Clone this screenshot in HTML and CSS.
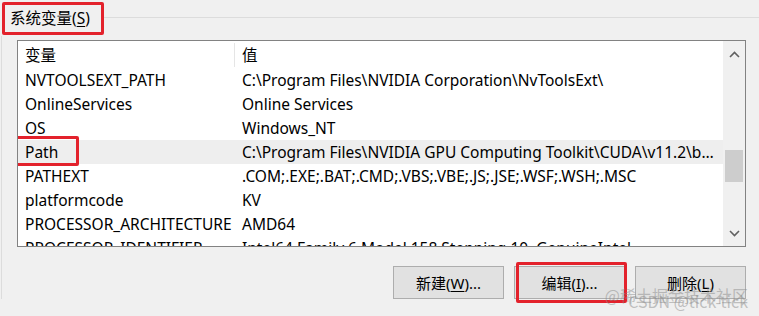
FILE: index.html
```html
<!DOCTYPE html>
<html>
<head>
<meta charset="utf-8">
<link rel="stylesheet" href="styles.css">
</head>
<body>

<div class="group">
  <div class="group-head">
    <div class="group-title marked">系统变量(<u>S</u>)</div>
    <div class="rule"></div>
  </div>

  <div class="group-body">
    <div class="listbox">
      <div class="list">
        <div class="list-header">
          <div class="col-name">变量</div>
          <div class="col-value">值</div>
        </div>
        <div class="row">
          <div class="col-name">NVTOOLSEXT_PATH</div>
          <div class="col-value">C:\Program Files\NVIDIA Corporation\NvToolsExt\</div>
        </div>
        <div class="row">
          <div class="col-name">OnlineServices</div>
          <div class="col-value">Online Services</div>
        </div>
        <div class="row">
          <div class="col-name">OS</div>
          <div class="col-value">Windows_NT</div>
        </div>
        <div class="row selected">
          <div class="col-name"><span class="marked path-mark">Path</span></div>
          <div class="col-value">C:\Program Files\NVIDIA GPU Computing Toolkit\CUDA\v11.2\bin;C:\Program Files</div>
        </div>
        <div class="row">
          <div class="col-name">PATHEXT</div>
          <div class="col-value">.COM;.EXE;.BAT;.CMD;.VBS;.VBE;.JS;.JSE;.WSF;.WSH;.MSC</div>
        </div>
        <div class="row">
          <div class="col-name">platformcode</div>
          <div class="col-value">KV</div>
        </div>
        <div class="row">
          <div class="col-name">PROCESSOR_ARCHITECTURE</div>
          <div class="col-value">AMD64</div>
        </div>
        <div class="row">
          <div class="col-name">PROCESSOR_IDENTIFIER</div>
          <div class="col-value">Intel64 Family 6 Model 158 Stepping 10, GenuineIntel</div>
        </div>
      </div>

      <div class="scrollbar">
        <div class="arrow">
          <svg width="11" height="7" viewBox="0 0 11 7"><path d="M1 6 L5.5 1.5 L10 6" fill="none" stroke="#606060" stroke-width="1.6"/></svg>
        </div>
        <div class="track">
          <div class="thumb"></div>
        </div>
        <div class="arrow">
          <svg width="11" height="7" viewBox="0 0 11 7"><path d="M1 1 L5.5 5.5 L10 1" fill="none" stroke="#606060" stroke-width="1.6"/></svg>
        </div>
      </div>
    </div>

    <div class="buttons">
      <button>新建(<u>W</u>)...</button>
      <button class="marked">编辑(<u>I</u>)...</button>
      <button>删除(<u>L</u>)</button>
      <div class="watermark">
        <div>@稀土掘金技术社区</div>
        <div>CSDN @tick-tick</div>
      </div>
    </div>
  </div>
</div>

</body>
</html>
```

FILE: styles.css
```css
body {
  margin: 0;
  padding: 0;
  background-color: #f0f0f0;
  font-family: "Noto Sans", "Noto Sans CJK SC", sans-serif;
  font-size: 15.5px;
  color: #000;
  width: 759px;
  height: 316px;
  overflow: hidden;
}

u {
  text-decoration-thickness: 1px;
  text-underline-offset: 2px;
}

.group {
  padding-left: 1px;
}

.group-head {
  display: flex;
  align-items: center;
  height: 36px;
}

.group-title {
  position: relative;
  padding: 0 0 0 9px;
  font-size: 15.5px;
  line-height: 20px;
  width: 93px;
}

.rule {
  flex: 1;
  height: 1px;
  background-color: #dcdcdc;
  margin-top: -2px;
}

.group-body {
  border-left: 1px solid #dcdcdc;
  padding-left: 15px;
  padding-top: 4px;
}

/* red marker boxes */
.marked {
  position: relative;
}

.marked::after {
  content: "";
  position: absolute;
  border: 3px solid #e3222c;
  border-radius: 2px;
  pointer-events: none;
}

.group-title::after {
  left: 1px;
  top: -6px;
  right: -1px;
  bottom: -7px;
}

.path-mark {
  display: inline-block;
  line-height: 24px;
}

.path-mark::after {
  left: -11px;
  top: -4px;
  right: -21px;
  bottom: -2px;
}

button.marked::after {
  left: 1px;
  top: -5px;
  right: -3px;
  bottom: -5px;
}

.listbox {
  display: flex;
  width: 727px;
  height: 205px;
  border: 1px solid #828282;
  background-color: #fff;
  overflow: hidden;
}

.list {
  flex: 1;
  min-width: 0;
  display: flex;
  flex-direction: column;
}

.list-header {
  display: flex;
  flex-shrink: 0;
  height: 27px;
  align-items: center;
}

.list-header .col-name {
  border-right: 1px solid #e5e5e5;
  height: 24px;
  line-height: 24px;
  width: 209px;
}

.row {
  display: flex;
  flex-shrink: 0;
  height: 24px;
  line-height: 24px;
}

.row.selected {
  background-color: #eeeeee;
}

.col-name {
  width: 210px;
  padding-left: 7px;
  flex-shrink: 0;
  white-space: nowrap;
}

.col-value {
  flex: 1;
  min-width: 0;
  padding-left: 7px;
  padding-right: 8px;
  white-space: nowrap;
  overflow: hidden;
  text-overflow: ellipsis;
}

.scrollbar {
  width: 22px;
  flex-shrink: 0;
  display: flex;
  flex-direction: column;
  background-color: #f0f0f0;
}

.arrow {
  height: 26px;
  display: flex;
  align-items: center;
  justify-content: center;
}

.track {
  flex: 1;
  padding-top: 83px;
}

.thumb {
  margin: 0 2px;
  height: 32px;
  background-color: #cdcdcd;
}

.buttons {
  position: relative;
  display: flex;
  justify-content: flex-end;
  gap: 10px;
  padding-top: 19px;
  width: 729px;
}

button {
  width: 111px;
  height: 33px;
  background-color: #e1e1e1;
  border: 1px solid #adadad;
  font-family: "Noto Sans", "Noto Sans CJK SC", sans-serif;
  font-size: 15px;
  color: #000;
  padding: 0;
}

.watermark {
  position: absolute;
  right: -2px;
  top: 45px;
  text-align: right;
  color: rgba(140, 140, 140, 0.5);
  font-size: 16px;
  line-height: 6px;
  font-family: "Noto Sans CJK SC", sans-serif;
}
```
